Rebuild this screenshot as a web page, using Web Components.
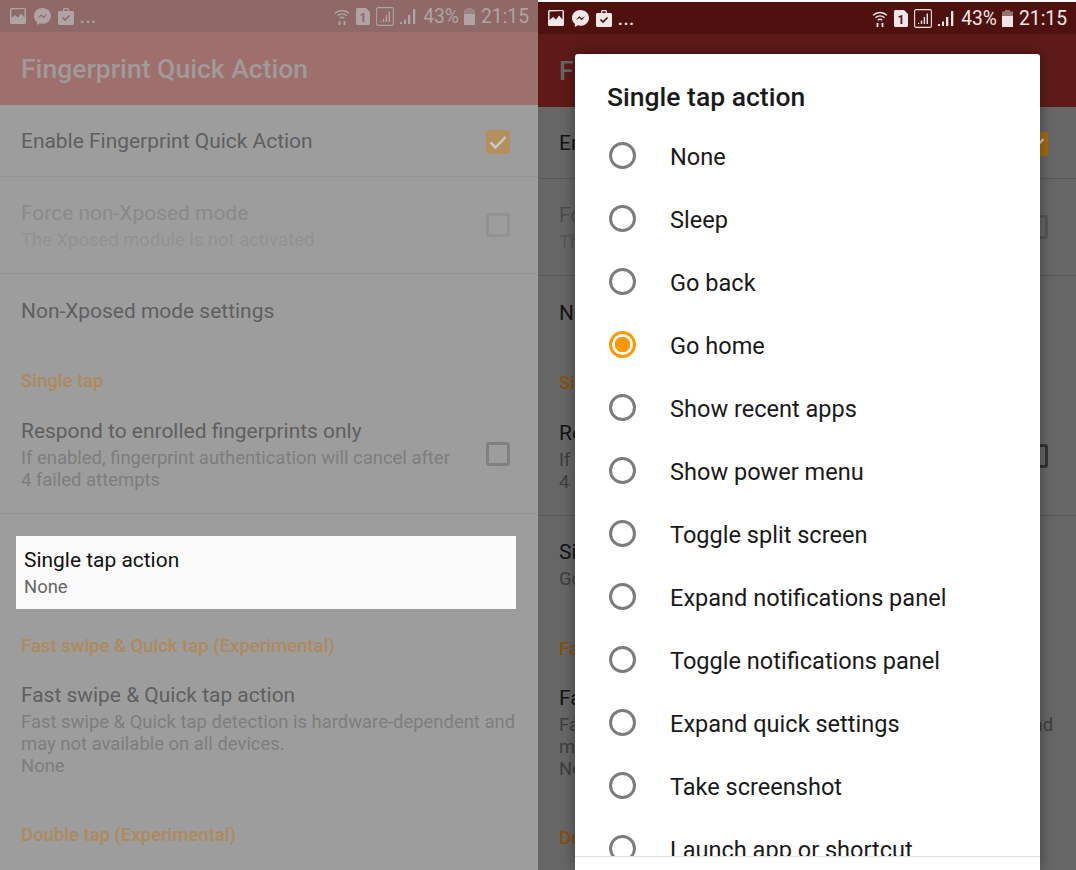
<!doctype html>
<html>
  <head>
    <meta charset="utf-8">
    <title>Fingerprint Quick Action</title>
    <style>
      html, body { margin: 0; padding: 0; background: #9d9d9d; }
      body { width: 1076px; height: 870px; overflow: hidden; display: grid; grid-template-columns: 538px 538px; font-family: Roboto, "Liberation Sans", sans-serif; }
      .dimmed {
        --status-bg: #8f6868; --status-fg: #b0a3a3; --bar-bg: #9e6f6d; --bar-fg: #a09a9a;
        --page-bg: #9d9d9d; --line: #939393; --title: #5f5f5f; --sub: #7d7d7d;
        --off-title: #8a8a8a; --off-sub: #929292; --accent: #ae8a5c; --check: #b5905f; --box: #808080;
        --off-box: #929292; --tick: #c9c9c9; --strip: 0px;
      }
      .dark {
        --status-bg: #4f1010; --status-fg: #f0e6e6; --bar-bg: #5e1a18; --bar-fg: #666;
        --page-bg: #666; --line: #585858; --title: #141414; --sub: #3e3e3e;
        --off-title: #4c4c4c; --off-sub: #565656; --accent: #8a5005; --check: #a56a0c; --box: #333;
        --off-box: #565656; --tick: #c9c9c9; --strip: 2px;
      }
    </style>
  </head>
  <body>

    <template id="status-bar-template">
      <style>
        :host { display: flex; align-items: center; height: 32px; background: var(--status-bg); color: var(--status-fg); padding: 0 9px 0 10px; font-size: 19.300px; }
        svg { display: block; flex: none; fill: currentColor; }
        .dots { margin-left: 6px; font-size: 16px; font-weight: 700; letter-spacing: 1px; line-height: 16px; padding-top: 4px; }
        .right { margin-left: auto; display: flex; align-items: center; padding-top: 1px; }
        .pct { margin-left: 7px; }
        .time { margin-left: 6px; }
      </style>
      <svg width="16" height="16" viewBox="0 0 16 16" style="margin-right:8px"><path d="M1.5 0h13A1.5 1.5 0 0 1 16 1.5v13a1.5 1.5 0 0 1-1.5 1.5h-13A1.5 1.5 0 0 1 0 14.500v-13A1.500 1.500 0 0 1 1.500 0zM1.500 1.500v8.500l3.500-3 3 2.500 3-4 3.500 4v-8.500z" fill-rule="evenodd"/></svg>
      <svg width="17" height="17" viewBox="0 0 17 17" style="margin-right:7px"><path d="M8.500 0C3.800 0 0 3.500 0 7.900c0 2.400 1.100 4.400 2.900 5.800V17l3-1.700c.8.200 1.700.4 2.600.4 4.700 0 8.500-3.500 8.500-7.800S13.200 0 8.500 0z"/><path d="M3.800 10.200l3.400-4 2.200 2.100 3.700-2.100-3.400 4-2.200-2.100z" style="fill:var(--status-bg)"/></svg>
      <svg width="16" height="17" viewBox="0 0 16 17"><path d="M5 3V1.500C5 .7 5.700 0 6.500 0h3c.8 0 1.500.7 1.500 1.500V3h3.500c.8 0 1.500.7 1.500 1.500v11c0 .8-.7 1.500-1.500 1.500h-13C.7 17 0 16.300 0 15.500v-11C0 3.700.7 3 1.500 3zM6.300 3h3.400V1.300H6.300z" fill-rule="evenodd"/><path d="M4.500 9.500l2.500 2.500 4.500-4.500" fill="none" stroke-width="1.700" style="stroke:var(--status-bg)"/></svg>
      <span class="dots">...</span>
      <div class="right">
        <svg width="16" height="18" viewBox="0 0 16 18" style="fill:none;stroke:currentColor;stroke-width:1.400"><path d="M1 5.200C4.800 1.600 11.200 1.600 15 5.200M3.400 7.700C6 5.300 10 5.300 12.600 7.700M5.800 10.100c1.300-1.100 3.100-1.100 4.400 0"/><path d="M5.500 13v4M10.500 13v4" stroke-width="1.800"/></svg>
        <svg width="14" height="17" viewBox="0 0 14 17" style="margin-left:6px"><path d="M1.500 0H10l4 4v11.500c0 .8-.7 1.500-1.500 1.500h-11C.7 17 0 16.300 0 15.500v-14C0 .7.700 0 1.500 0z"/><text x="7" y="13.500" text-anchor="middle" font-family="Roboto, sans-serif" font-weight="700" font-size="12" style="fill:var(--status-bg)">1</text></svg>
        <svg width="18" height="19" viewBox="0 0 18 19" style="margin-left:6px"><rect x=".6" y=".6" width="16.800" height="17.800" rx="1.500" fill="none" stroke="currentColor" stroke-width="1.100"/><path d="M4 14h1.300v1H4zM6.800 11.500h1.400V15H6.800zM9.700 8h1.400v7H9.700zM12.600 4.500H14V15h-1.400z"/></svg>
        <svg width="16" height="15" viewBox="0 0 16 15" style="margin-left:6px"><path d="M0 13h2v2H0zM4 10.500h2V15H4zM8 6h2.300v9H8zM13 0h2.300v15H13z"/></svg>
        <span class="pct">43%</span>
        <svg width="11" height="17" viewBox="0 0 11 17" style="margin-left:5px"><path d="M3 0h5v1.500h3V6H0V1.500h3z" opacity=".45"/><path d="M0 6h11v11H0z"/></svg>
        <span class="time">21:15</span>
      </div>
    </template>

    <template id="app-bar-template">
      <style>
        :host { display: flex; align-items: center; height: 73px; background: var(--bar-bg); color: var(--bar-fg); padding-left: 21px; font-size: 26.550px; font-weight: 500; box-sizing: border-box; }
      </style>
      <slot></slot>
    </template>

    <template id="check-box-template">
      <style>
        :host { display: block; flex: none; width: 24px; height: 24px; box-sizing: border-box; border: 3px solid var(--box); border-radius: 3px; }
        :host([off]) { border-color: var(--off-box); }
        :host([checked]) { border: 0; background: var(--check); }
        svg { display: none; }
        :host([checked]) svg { display: block; }
      </style>
      <svg width="24" height="24" viewBox="0 0 24 24"><path d="M4.500 12.500l5 5 10-10.500" fill="none" stroke="var(--tick)" stroke-width="2.500"/></svg>
    </template>

    <template id="setting-row-template">
      <style>
        :host { display: flex; align-items: center; padding: 21px 28px 22px 21px; }
        :host([divider]) { border-bottom: 1px solid var(--line); }
        :host([flush]) { padding-top: 0; }
        .text { flex: 1; min-width: 0; }
        .title { font-size: 20.950px; line-height: 30px; color: var(--title); white-space: nowrap; }
        .sub { font-size: 18.450px; line-height: 22px; margin-top: 1px; color: var(--sub); white-space: nowrap; }
        .sub:empty { display: none; }
        :host([off]) .title { color: var(--off-title); }
        :host([off]) .sub { color: var(--off-sub); }
        :host([highlight]) { margin: 22px 22px 1px 16px; padding: 9px 8px 11px; background: #fbfbfb; }
        :host([highlight]) .title { color: #111; }
        :host([highlight]) .sub { color: #666; }
      </style>
      <div class="text">
        <div class="title"><slot></slot></div>
        <div class="sub"><slot name="sub"></slot></div>
      </div>
      <slot name="control"></slot>
    </template>

    <template id="section-head-template">
      <style>
        :host { display: flex; align-items: center; height: 68px; padding: 0 0 1px 21px; font-size: 18.500px; font-weight: 500; color: var(--accent); }
      </style>
      <slot></slot>
    </template>

    <template id="settings-list-template">
      <style>
        :host { display: block; background: var(--page-bg); }
      </style>
      <setting-row divider style="padding-bottom:19px">Enable Fingerprint Quick Action<check-box slot="control" checked></check-box></setting-row>
      <setting-row divider off>Force non-Xposed mode<span slot="sub">The Xposed module is not activated</span><check-box slot="control" off></check-box></setting-row>
      <setting-row style="padding-top:22px;padding-bottom:20px">Non-Xposed mode settings</setting-row>
      <section-head>Single tap</section-head>
      <setting-row divider flush>Respond to enrolled fingerprints only<span slot="sub">If enabled, fingerprint authentication will cancel after<br>4 failed attempts</span><check-box slot="control"></check-box></setting-row>
      <setting-row id="single">Single tap action<span slot="sub" id="single-value"></span></setting-row>
      <section-head style="margin-top:3px;padding-bottom:0">Fast swipe &amp; Quick tap (Experimental)</section-head>
      <setting-row flush>Fast swipe &amp; Quick tap action<span slot="sub">Fast swipe &amp; Quick tap detection is hardware-dependent and<br>may not available on all devices.<br>None</span></setting-row>
      <section-head style="margin-top:2px">Double tap (Experimental)</section-head>
    </template>

    <template id="radio-option-template">
      <style>
        :host { display: flex; align-items: center; height: 63px; flex: none; font-size: 23.550px; color: #1a1a1a; white-space: nowrap; }
        .dot { flex: none; width: 27px; height: 27px; box-sizing: border-box; border: 3px solid #7c7c7c; border-radius: 50%; margin-right: 34px; position: relative; top: -1px; }
        :host([checked]) .dot { border-color: #ff9800; background: radial-gradient(circle, #ff9800 0 7.500px, #fff 8px); }
      </style>
      <span class="dot"></span><slot></slot>
    </template>

    <template id="radio-dialog-template">
      <style>
        :host { position: absolute; left: 37px; right: 36px; top: 52px; bottom: 0; display: flex; flex-direction: column; background: #fff; border-radius: 3px 3px 0 0; box-shadow: 0 0 14px rgba(0,0,0,.4); }
        h2 { margin: 0; padding: 26px 32px 0; height: 71px; box-sizing: border-box; flex: none; font-size: 26.500px; line-height: 34px; font-weight: 500; color: #1a1a1a; }
        .options { height: 731px; flex: none; overflow: hidden; padding-left: 34px; display: flex; flex-direction: column; border-bottom: 1px solid #e2e2e2; }
      </style>
      <h2><slot name="heading"></slot></h2>
      <div class="options"><slot></slot></div>
    </template>

    <template id="phone-screen-template">
      <style>
        :host { display: block; position: relative; height: 870px; overflow: hidden; box-sizing: border-box; border-top: var(--strip) solid #fff; background: var(--page-bg); }
      </style>
      <slot></slot>
    </template>

    <phone-screen class="dimmed">
      <status-bar></status-bar>
      <app-bar>Fingerprint Quick Action</app-bar>
      <settings-list highlight single-value="None"></settings-list>
    </phone-screen>

    <phone-screen class="dark">
      <status-bar></status-bar>
      <app-bar>Fingerprint Quick Action</app-bar>
      <settings-list single-value="Go home"></settings-list>
      <radio-dialog>
        <span slot="heading">Single tap action</span>
        <radio-option>None</radio-option>
        <radio-option>Sleep</radio-option>
        <radio-option>Go back</radio-option>
        <radio-option checked>Go home</radio-option>
        <radio-option>Show recent apps</radio-option>
        <radio-option>Show power menu</radio-option>
        <radio-option>Toggle split screen</radio-option>
        <radio-option>Expand notifications panel</radio-option>
        <radio-option>Toggle notifications panel</radio-option>
        <radio-option>Expand quick settings</radio-option>
        <radio-option>Take screenshot</radio-option>
        <radio-option>Launch app or shortcut</radio-option>
      </radio-dialog>
    </phone-screen>

    <script>
      function stamp(name) {
        customElements.define(name, class extends HTMLElement {
          constructor() {
            super();
            var shadowRoot = this.attachShadow({mode: 'open'});
            var tmpl = document.querySelector('#' + name + '-template');
            shadowRoot.appendChild(tmpl.content.cloneNode(true));
          }
        });
      }
      ['status-bar', 'app-bar', 'check-box', 'setting-row', 'section-head', 'radio-option', 'radio-dialog', 'phone-screen'].forEach(stamp);

      customElements.define('settings-list', class extends HTMLElement {
        constructor() {
          super();
          var shadowRoot = this.attachShadow({mode: 'open'});
          var tmpl = document.querySelector('#settings-list-template');
          shadowRoot.appendChild(tmpl.content.cloneNode(true));
        }
        connectedCallback() {
          this.shadowRoot.querySelector('#single-value').textContent = this.getAttribute('single-value');
          if (this.hasAttribute('highlight')) {
            this.shadowRoot.querySelector('#single').setAttribute('highlight', '');
          }
        }
      });
    </script>
  </body>
</html>
